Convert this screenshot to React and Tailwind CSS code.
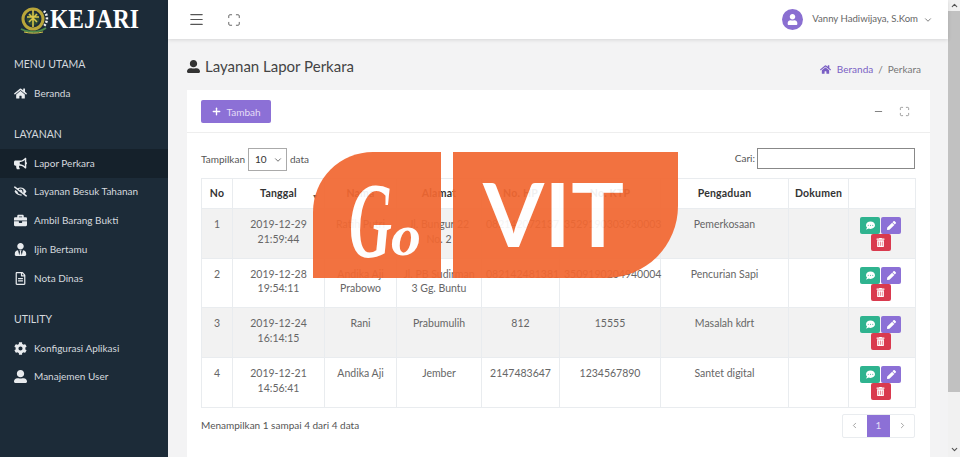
import { Menu, Maximize, Minus, ChevronDown, ChevronUp, ChevronLeft, ChevronRight, Plus } from "lucide-react";
import {
  FaHome, FaBullhorn, FaEyeSlash, FaBriefcase, FaUserTie, FaRegFileAlt, FaCog, FaUserAlt, FaUser, FaPen, FaTrashAlt, FaCommentDots,
} from "react-icons/fa";

/* ================= DATA ================= */
const menuGroups = [
  { title: "MENU UTAMA", items: [{ name: "Beranda", icon: FaHome }] },
  {
    title: "LAYANAN",
    items: [
      { name: "Lapor Perkara", icon: FaBullhorn, active: true },
      { name: "Layanan Besuk Tahanan", icon: FaEyeSlash },
      { name: "Ambil Barang Bukti", icon: FaBriefcase },
      { name: "Ijin Bertamu", icon: FaUserTie },
      { name: "Nota Dinas", icon: FaRegFileAlt },
    ],
  },
  {
    title: "UTILITY",
    items: [
      { name: "Konfigurasi Aplikasi", icon: FaCog },
      { name: "Manajemen User", icon: FaUserAlt },
    ],
  },
];

const headers = ["No", "Tanggal", "Nama", "Alamat", "No. HP", "No. KTP", "Pengaduan", "Dokumen", ""];

const rows = [
  ["1", "2019-12-29 21:59:44", "Ratih Putri", "Jl. Bungur 22 No. 2", "082142072137", "3529190303930003", "Pemerkosaan"],
  ["2", "2019-12-28 19:54:11", "Andika Aji Prabowo", "Jl. PB Sudirman 3 Gg. Buntu", "082142481381", "3509190204940004", "Pencurian Sapi"],
  ["3", "2019-12-24 16:14:15", "Rani", "Prabumulih", "812", "15555", "Masalah kdrt"],
  ["4", "2019-12-21 14:56:41", "Andika Aji", "Jember", "2147483647", "1234567890", "Santet digital"],
];

/* ================= PARTS ================= */
const Emblem = () => (
  <svg width="32" height="28" viewBox="0 0 32 28" className="shrink-0">
    <circle cx="15" cy="13" r="10" fill="none" stroke="#b9a63a" strokeWidth="3" />
    <circle cx="15" cy="13" r="6.5" fill="#2d4a35" />
    <path d="M15 4v17M9 11h12M11 8l8 8M19 8l-8 8" stroke="#d9c64a" strokeWidth="1.6" />
    <path d="M26 5a11 11 0 0 1 0 15" fill="none" stroke="#f1f1f1" strokeWidth="2.5" strokeDasharray="2 1.5" />
    <path d="M3 23c7 4 17 4 25-1" fill="none" stroke="#4d8a4a" strokeWidth="2" />
    <path d="M6 26c6 1.500 13 1.500 19 0" fill="none" stroke="#d9c64a" strokeWidth="1" />
  </svg>
);

const Sidebar = () => (
  <aside className="w-[168px] shrink-0 bg-[#1c2b38] text-[#d5dadf]">
    <div className="h-[39px] flex items-center pl-[18px]">
      <Emblem />
      <span className="font-['Liberation_Serif',serif] font-bold text-white text-[23.5px] leading-none scale-y-[1.2]">
        KEJARI
      </span>
    </div>
    <nav className="pt-[16px]">
      {menuGroups.map(group => (
        <div key={group.title} className="mb-[17px]">
          <p className="h-[18px] pl-[14px] text-[10.5px] leading-[18px]">{group.title}</p>
          <div className="mt-[6px]">
            {group.items.map(item => (
              <div
                key={item.name}
                className={`h-[28.8px] flex items-center pl-[14px] text-[10px] ${item.active ? "bg-[#15212b]" : ""}`}
              >
                <item.icon className="w-[13px] h-[13px] mr-[7px] text-[#e8ebee]" />
                {item.name}
              </div>
            ))}
          </div>
        </div>
      ))}
    </nav>
  </aside>
);

const Topbar = () => (
  <header className="h-[39px] shrink-0 bg-white shadow-[0_1px_4px_rgba(0,0,0,0.12)] flex items-center justify-between pl-[20px] pr-[15px] relative z-10">
    <div className="flex items-center gap-[22px] text-[#555]">
      <Menu className="w-[17px] h-[17px]" strokeWidth={1.7} />
      <Maximize className="w-[14px] h-[14px]" strokeWidth={1.5} />
    </div>
    <div className="flex items-center text-[9.6px] text-[#666]">
      <span className="w-[21px] h-[21px] rounded-full bg-[#8a6fd1] flex items-center justify-center mr-[9px]">
        <FaUser className="w-[11px] h-[11px] text-white" />
      </span>
      Vanny Hadiwijaya, S.Kom
      <ChevronDown className="w-[10px] h-[10px] ml-[5px]" />
    </div>
  </header>
);

const ActionButtons = () => (
  <div className="flex flex-wrap justify-center w-[41px] ml-[11px] mt-[1px]">
    <span className="w-[20px] h-[17px] rounded-[2px] bg-[#2fb38f] flex items-center justify-center mr-[1px]">
      <FaCommentDots className="w-[9px] h-[9px] text-white" />
    </span>
    <span className="w-[20px] h-[17px] rounded-[2px] bg-[#8c70d6] flex items-center justify-center">
      <FaPen className="w-[9px] h-[9px] text-white" />
    </span>
    <span className="w-[20px] h-[17px] rounded-[2px] bg-[#d93a4e] flex items-center justify-center">
      <FaTrashAlt className="w-[9px] h-[9px] text-white" />
    </span>
  </div>
);

const DataTable = () => (
  <table className="w-[714px] table-fixed border-collapse text-[10.5px] text-[#666] mt-[7px]">
    <colgroup>
      <col className="w-[31px]" />
      <col className="w-[92px]" />
      <col className="w-[72px]" />
      <col className="w-[85px]" />
      <col className="w-[78px]" />
      <col className="w-[101px]" />
      <col className="w-[128px]" />
      <col className="w-[60px]" />
      <col className="w-[67px]" />
    </colgroup>
    <thead>
      <tr className="h-[30px]">
        {headers.map((h, i) => (
          <th key={i} className="border border-[#e9ecef] font-bold text-[#333] text-center relative tracking-[0.2px]">
            {h}
            {i === 1 && <span className="absolute right-[5px] top-[12px] text-[7px] text-[#555]">▼</span>}
          </th>
        ))}
      </tr>
    </thead>
    <tbody>
      {rows.map((row, r) => (
        <tr key={row[0]} className={`h-[49.7px] ${r % 2 === 0 ? "bg-[#f2f2f2]" : "bg-white"}`}>
          {row.map((cell, c) => (
            <td key={c} className="border border-[#e9ecef] align-top text-center pt-[8px] px-[4px] leading-[14.5px]">
              {cell}
            </td>
          ))}
          <td className="border border-[#e9ecef]" />
          <td className="border border-[#e9ecef] align-middle">
            <ActionButtons />
          </td>
        </tr>
      ))}
    </tbody>
  </table>
);

const GoVitLogo = () => (
  <div className="absolute left-[313px] top-[152px] flex gap-[12px] opacity-[0.93]">
    <div className="w-[128px] h-[126px] bg-[#f26832] rounded-tl-[60px] flex items-center pl-[36px]">
      <span className="font-['Liberation_Serif',serif] italic font-bold text-white leading-none whitespace-nowrap mt-[12px]">
        <span className="inline-block w-[42px] text-[108px] scale-x-[0.55] origin-left">G</span>
        <span className="inline-block text-[60px] -translate-y-[2px]">o</span>
      </span>
    </div>
    <div className="w-[225px] h-[126px] bg-[#f26832] rounded-br-[72px] flex items-center pl-[30px]">
      <span className="font-['Lato',sans-serif] font-bold text-white text-[88px] leading-none tracking-[0.5px] -mt-[4px]">VIT</span>
    </div>
  </div>
);

const Scrollbar = () => (
  <div className="w-[12px] shrink-0 bg-[#f1f1f1] flex flex-col items-center">
    <ChevronUp className="w-[9px] h-[11px] text-[#555] shrink-0" strokeWidth={3} />
    <div className="w-full h-[381px] bg-[#c1c1c1]" />
    <div className="flex-1" />
    <ChevronDown className="w-[9px] h-[11px] text-[#555] shrink-0 mb-[2px]" strokeWidth={3} />
  </div>
);

/* ================= APP ================= */
export default function App() {
  return (
    <div className="relative h-screen w-full overflow-hidden flex font-['Lato',sans-serif] bg-[#f3f3f4]">
      <Sidebar />

      <div className="flex-1 min-w-0 flex flex-col">
        <Topbar />

        <main className="flex-1 overflow-hidden pl-[19px] pr-[18px]">
          <div className="h-[51px] flex items-center justify-between pr-[9px]">
            <h1 className="flex items-center text-[15px] text-[#444] mt-[4px]">
              <FaUserAlt className="w-[13px] h-[13px] mr-[5px] text-[#333]" />
              Layanan Lapor Perkara
            </h1>
            <div className="flex items-center text-[10px] text-[#777] mt-[9px]">
              <FaHome className="w-[11px] h-[11px] text-[#7a5fc4] mr-[6px]" />
              <span className="text-[#7a5fc4]">Beranda</span>
              <span className="mx-[5px]">/</span>
              Perkara
            </div>
          </div>

          <section className="bg-white h-[400px]">
            <div className="h-[43px] border-b border-[#eeeeee] flex items-center justify-between pl-[14px] pr-[20px]">
              <button className="w-[70px] h-[23px] bg-[#8c70d6] rounded-[2px] text-[#e4def6] text-[10px] flex items-center justify-center pt-[2px]">
                <Plus className="w-[11px] h-[11px] mr-[4px] text-white -mt-[2px]" strokeWidth={3} />
                Tambah
              </button>
              <div className="flex items-center gap-[15px] text-[#777]">
                <Minus className="w-[11px] h-[11px]" />
                <Maximize className="w-[11px] h-[11px]" strokeWidth={1.5} />
              </div>
            </div>

            <div className="pl-[14px] pr-[15px] pt-[15px]">
              <div className="flex items-center justify-between text-[10px] text-[#555] h-[23px]">
                <div className="flex items-center">
                  Tampilkan
                  <span className="w-[39px] h-[23px] border border-[#aaaaaa] mx-[3px] flex items-center justify-between pl-[6px] pr-[3px] text-[#333]">
                    10
                    <ChevronDown className="w-[10px] h-[10px] text-[#555]" />
                  </span>
                  data
                </div>
                <div className="flex items-center self-start">
                  Cari:
                  <input className="w-[158px] h-[21px] border border-[#888888] ml-[2px] bg-white" readOnly />
                </div>
              </div>

              <DataTable />

              <div className="flex items-center justify-between mt-[6px] text-[10px] text-[#555]">
                Menampilkan 1 sampai 4 dari 4 data
                <div className="flex h-[24px] w-[73px] border border-[#e9ecef] rounded-[2px] text-[#888]">
                  <span className="flex-1 flex items-center justify-center">
                    <ChevronLeft className="w-[9px] h-[9px]" />
                  </span>
                  <span className="flex-1 flex items-center justify-center bg-[#8c70d6] text-[#e4def6]">1</span>
                  <span className="flex-1 flex items-center justify-center">
                    <ChevronRight className="w-[9px] h-[9px]" />
                  </span>
                </div>
              </div>
            </div>
          </section>
        </main>
      </div>

      <Scrollbar />
      <GoVitLogo />
    </div>
  );
}
